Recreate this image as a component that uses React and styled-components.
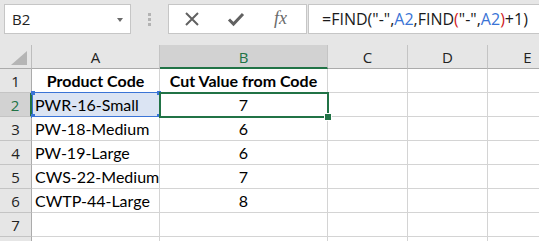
import React from 'react'
import styled, { createGlobalStyle } from 'styled-components'

const GlobalStyle = createGlobalStyle`
    html, body {
        margin: 0;
        padding: 0;
        background: #ffffff;
    }
`

const COLS = [
    { key: 'A', width: 128 },
    { key: 'B', width: 168 },
    { key: 'C', width: 80 },
    { key: 'D', width: 80 },
    { key: 'E', width: 80 },
]

const ROWS = [
    { a: 'Product Code', b: 'Cut Value from Code', bold: true },
    { a: 'PWR-16-Small', b: '7' },
    { a: 'PW-18-Medium', b: '6' },
    { a: 'PW-19-Large', b: '6' },
    { a: 'CWS-22-Medium', b: '7' },
    { a: 'CWTP-44-Large', b: '8' },
    { a: '', b: '' },
    { a: '', b: '', hidden: true },
]

const GREEN = '#217346'
const BLUE = '#3a74d6'

export default function App() {
    return (
        <>
            <GlobalStyle />
            <StyledWindow>
                <StyledFormulaBar>
                    <StyledNameBox>
                        <span>B2</span>
                        <StyledCaret />
                    </StyledNameBox>
                    <StyledGrip>
                        <i /><i /><i />
                    </StyledGrip>
                    <StyledButtons>
                        <svg width="16" height="16" viewBox="0 0 16 16">
                            <path d="M2 2 L14 14 M14 2 L2 14" stroke="#616161" strokeWidth="2" fill="none" />
                        </svg>
                        <svg width="18" height="16" viewBox="0 0 18 16">
                            <path d="M2 8.5 L6.5 13 L16 3" stroke="#616161" strokeWidth="3" fill="none" />
                        </svg>
                        <StyledFx>fx</StyledFx>
                    </StyledButtons>
                    <StyledFormula>
                        =FIND("-",<StyledRef>A2</StyledRef>,FIND<StyledParen>(</StyledParen>"-",<StyledRef>A2</StyledRef><StyledParen>)</StyledParen>+1)
                    </StyledFormula>
                </StyledFormulaBar>

                <StyledGrid>
                    <StyledCorner>
                        <svg width="16" height="14" viewBox="0 0 16 14">
                            <path d="M16 0 L16 14 L0 14 Z" fill="#b5b5b5" />
                        </svg>
                    </StyledCorner>
                    {COLS.map(c => (
                        <StyledColHead key={c.key} $active={c.key === 'B'}>{c.key}</StyledColHead>
                    ))}

                    {ROWS.map((r, i) => {
                        const n = i + 1
                        return (
                            <React.Fragment key={n}>
                                <StyledRowHead $active={n === 2}>{r.hidden ? '' : n}</StyledRowHead>
                                <StyledCell $bold={r.bold} $align={r.bold ? 'center' : 'left'} $ref={n === 2}>
                                    {r.a}
                                    {n === 2 && <StyledRefBox><b /><b /><b /><b /></StyledRefBox>}
                                </StyledCell>
                                <StyledCell $bold={r.bold} $align="center">
                                    {r.b}
                                    {n === 2 && <StyledSelection />}
                                </StyledCell>
                                <StyledCell />
                                <StyledCell />
                                <StyledCell />
                            </React.Fragment>
                        )
                    })}
                </StyledGrid>
            </StyledWindow>
        </>
    )
}

const StyledWindow = styled.div`
    width: 539px;
    height: 241px;
    overflow: hidden;
    background: #e6e6e6;
    font-family: "Open Sans", "Liberation Sans", sans-serif;
`

const StyledFormulaBar = styled.div`
    display: flex;
    align-items: center;
    height: 45px;
    padding: 4px 0 11px 4px;
    box-sizing: border-box;
`

const StyledBox = styled.div`
    height: 30px;
    box-sizing: border-box;
    background: #ffffff;
    border: 1px solid #c6c6c6;
    display: flex;
    align-items: center;
`

const StyledNameBox = styled(StyledBox)`
    width: 127px;
    padding: 0 7px 0 7px;
    justify-content: space-between;
    font-size: 15px;
    color: #222222;
`

const StyledCaret = styled.div`
    width: 0;
    height: 0;
    border-left: 3.5px solid transparent;
    border-right: 3.5px solid transparent;
    border-top: 4px solid #6a6a6a;
    margin-top: 2px;
`

const StyledGrip = styled.div`
    width: 37px;
    display: flex;
    flex-direction: column;
    align-items: center;
    gap: 2px;
    i {
        display: block;
        width: 3px;
        height: 3px;
        background: #b3b3b3;
    }
`

const StyledButtons = styled(StyledBox)`
    width: 139px;
    padding: 0 0 0 15px;
    gap: 28px;
    svg:nth-child(2) {
        margin-left: -1px;
    }
`

const StyledFx = styled.span`
    font-family: "Liberation Serif", "DejaVu Serif", serif;
    font-style: italic;
    font-size: 18px;
    color: #6a6a6a;
    margin-left: 1px;
    margin-top: -2px;
`

const StyledFormula = styled(StyledBox)`
    flex: 1;
    margin-left: 1px;
    border-right: none;
    padding-left: 13px;
    font-size: 16px;
    color: #1a1a1a;
    white-space: pre;
`

const StyledRef = styled.span`
    color: ${BLUE};
`

const StyledParen = styled.span`
    color: #d0201e;
`

const StyledGrid = styled.div`
    display: grid;
    grid-template-columns: 32px ${COLS.map(c => c.width + 'px').join(' ')};
    grid-auto-rows: 24px;
    background: #ffffff;
`

const StyledHead = styled.div`
    box-sizing: border-box;
    background: #e6e6e6;
    display: flex;
    align-items: center;
    justify-content: center;
    font-size: 15px;
    color: #222222;
`

const StyledCorner = styled(StyledHead)`
    border-right: 1px solid #bdbdbd;
    border-bottom: 1px solid #ababab;
    justify-content: flex-end;
    align-items: flex-end;
    padding: 0 4px 3px 0;
`

const StyledColHead = styled(StyledHead)`
    border-right: 1px solid #c4c4c4;
    border-bottom: ${p => (p.$active ? `2px solid ${GREEN}` : '1px solid #ababab')};
    background: ${p => (p.$active ? '#d2d2d2' : '#e6e6e6')};
    color: ${p => (p.$active ? GREEN : '#222222')};
    padding-top: ${p => (p.$active ? '1px' : '0')};
`

const StyledRowHead = styled(StyledHead)`
    border-bottom: 1px solid #c4c4c4;
    border-right: ${p => (p.$active ? `2px solid ${GREEN}` : '1px solid #ababab')};
    background: ${p => (p.$active ? '#d2d2d2' : '#e6e6e6')};
    color: ${p => (p.$active ? GREEN : '#222222')};
`

const StyledCell = styled.div`
    position: relative;
    box-sizing: border-box;
    border-right: 1px solid #d4d4d4;
    border-bottom: 1px solid #d4d4d4;
    background: ${p => (p.$ref ? '#dbe4f3' : '#ffffff')};
    font-family: Lato, "Open Sans", sans-serif;
    font-size: 16px;
    font-weight: ${p => (p.$bold ? 700 : 400)};
    color: #000000;
    display: flex;
    align-items: center;
    justify-content: ${p => (p.$align === 'center' ? 'center' : 'flex-start')};
    padding: 0 3px;
    white-space: nowrap;
`

const StyledRefBox = styled.div`
    position: absolute;
    top: -1px;
    left: 0;
    right: -1px;
    bottom: -1px;
    border: 1px solid ${BLUE};
    pointer-events: none;
    b {
        position: absolute;
        width: 4px;
        height: 4px;
        background: ${BLUE};
    }
    b:nth-child(1) { top: -2px; left: -2px; }
    b:nth-child(2) { top: -2px; right: -2px; }
    b:nth-child(3) { bottom: -2px; left: -2px; }
    b:nth-child(4) { bottom: -2px; right: -2px; }
`

const StyledSelection = styled.div`
    position: absolute;
    top: -1px;
    left: -1px;
    right: -2px;
    bottom: -2px;
    border: 2px solid ${GREEN};
    pointer-events: none;
    z-index: 2;
    &::after {
        content: '';
        position: absolute;
        right: -5px;
        bottom: -5px;
        width: 6px;
        height: 6px;
        background: ${GREEN};
        border: 1px solid #ffffff;
    }
`
